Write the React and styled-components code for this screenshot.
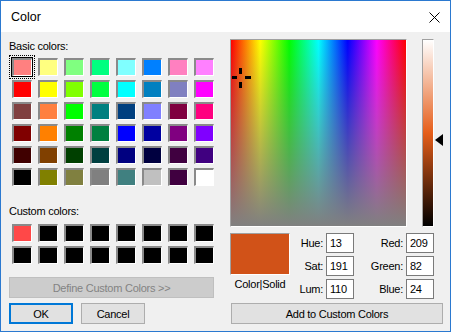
import styled, { createGlobalStyle } from "styled-components";

const basicColors = [
  "#FF8080", "#FFFF80", "#80FF80", "#00FF80", "#80FFFF", "#0080FF", "#FF80C0", "#FF80FF",
  "#FF0000", "#FFFF00", "#80FF00", "#00FF40", "#00FFFF", "#0080C0", "#8080C0", "#FF00FF",
  "#804040", "#FF8040", "#00FF00", "#008080", "#004080", "#8080FF", "#800040", "#FF0080",
  "#800000", "#FF8000", "#008000", "#008040", "#0000FF", "#0000A0", "#800080", "#8000FF",
  "#400000", "#804000", "#004000", "#004040", "#000080", "#000040", "#400040", "#400080",
  "#000000", "#808000", "#808040", "#808080", "#408080", "#C0C0C0", "#400040", "#FFFFFF"
];

const customColors = ["#FF4848", ...Array(15).fill("#000000")];

const current = { hue: 13, sat: 191, lum: 110, red: 209, green: 82, blue: 24 };

const GlobalStyle = createGlobalStyle`
  html, body {
    margin: 0;
    padding: 0;
    background: #ffffff;
  }
  body {
    font-family: "Liberation Sans", Arial, sans-serif;
    font-size: 11px;
    letter-spacing: -0.25px;
    color: #000;
  }
`;

const App = () => {
  const crossX = Math.round((current.hue / 240) * 176);
  const crossY = Math.round((1 - current.sat / 240) * 187);
  const arrowY = Math.round((1 - current.lum / 240) * 187);

  return (
    <>
      <GlobalStyle />
      <Window>
        <TitleBar>
          <Title>Color</Title>
          <CloseIcon viewBox="0 0 11 11">
            <path d="M0.5 0.5 L10.5 10.5 M10.5 0.5 L0.5 10.5" stroke="#000" strokeWidth="1" />
          </CloseIcon>
        </TitleBar>
        <Body>
          <LeftPane>
            <SectionLabel>Basic colors:</SectionLabel>
            <SwatchGrid>
              {basicColors.map((c, i) => (
                <SwatchCell key={i} $selected={i === 0}>
                  <Swatch $color={c} />
                </SwatchCell>
              ))}
            </SwatchGrid>
            <SectionLabel $top={18}>Custom colors:</SectionLabel>
            <SwatchGrid $top={6}>
              {customColors.map((c, i) => (
                <SwatchCell key={i}>
                  <Swatch $color={c} />
                </SwatchCell>
              ))}
            </SwatchGrid>
            <WideButton disabled>Define Custom Colors &gt;&gt;</WideButton>
            <ButtonRow>
              <DialogButton $default>OK</DialogButton>
              <DialogButton>Cancel</DialogButton>
            </ButtonRow>
          </LeftPane>

          <RightPane>
            <PickerRow>
              <Spectrum>
                <Crosshair viewBox="0 0 19 20" style={{ left: crossX - 9, top: crossY - 10 }}>
                  <rect x="7" y="0" width="3" height="6" fill="#000" />
                  <rect x="7" y="14" width="3" height="6" fill="#000" />
                  <rect x="0" y="8" width="5" height="3" fill="#000" />
                  <rect x="13" y="8" width="6" height="3" fill="#000" />
                </Crosshair>
              </Spectrum>
              <LumColumn>
                <LumBar />
                <LumArrow viewBox="0 0 8 12" style={{ top: arrowY - 6 }}>
                  <path d="M8 0 L0 6 L8 12 Z" fill="#000" />
                </LumArrow>
              </LumColumn>
            </PickerRow>

            <ValuesRow>
              <PreviewColumn>
                <Preview $color="#D15218" />
                <PreviewLabel>Color|Solid</PreviewLabel>
              </PreviewColumn>
              <Fields>
                <FieldLabel>Hue:</FieldLabel>
                <Field value={current.hue} readOnly />
                <FieldLabel>Red:</FieldLabel>
                <Field value={current.red} readOnly />
                <FieldLabel>Sat:</FieldLabel>
                <Field value={current.sat} readOnly />
                <FieldLabel>Green:</FieldLabel>
                <Field value={current.green} readOnly />
                <FieldLabel>Lum:</FieldLabel>
                <Field value={current.lum} readOnly />
                <FieldLabel>Blue:</FieldLabel>
                <Field value={current.blue} readOnly />
              </Fields>
            </ValuesRow>

            <AddButton>Add to Custom Colors</AddButton>
          </RightPane>
        </Body>
      </Window>
    </>
  );
};

const Window = styled.div`
  width: 451px;
  height: 332px;
  box-sizing: border-box;
  border: 1px solid #2b79d0;
  background: #f0f0f0;
  display: flex;
  flex-direction: column;
`;

const TitleBar = styled.div`
  height: 31px;
  flex-shrink: 0;
  background: #ffffff;
  display: flex;
  align-items: center;
  justify-content: space-between;
  padding: 0 10px 0 10px;
`;

const Title = styled.div`
  font-size: 12.5px;
  letter-spacing: 0;
  margin-top: 1px;
`;

const CloseIcon = styled.svg`
  width: 11px;
  height: 11px;
  margin-top: 1px;
`;

const Body = styled.div`
  flex: 1;
  display: flex;
  padding-left: 8px;
`;

const LeftPane = styled.div`
  width: 205px;
  display: flex;
  flex-direction: column;
`;

const SectionLabel = styled.div`
  height: 14px;
  line-height: 14px;
  margin-top: ${(p) => (p.$top ?? 7)}px;
`;

const SwatchGrid = styled.div`
  display: grid;
  grid-template-columns: repeat(8, 20px);
  grid-auto-rows: 18px;
  column-gap: 6px;
  row-gap: 4px;
  margin-top: ${(p) => (p.$top ?? 5)}px;
  padding-left: 3px;
`;

const SwatchCell = styled.div`
  position: relative;
  width: 20px;
  height: 18px;
  box-sizing: border-box;
  border-top: 2px solid #8a8a8a;
  border-left: 2px solid #8a8a8a;
  border-right: 1px solid #ffffff;
  border-bottom: 1px solid #ffffff;
  outline: ${(p) => (p.$selected ? "1px solid #000" : "none")};
  outline-offset: 0;

  &::after {
    content: "";
    display: ${(p) => (p.$selected ? "block" : "none")};
    position: absolute;
    left: -5px;
    top: -5px;
    right: -4px;
    bottom: -4px;
    border: 1px dotted #000;
  }
`;

const Swatch = styled.div`
  width: 100%;
  height: 100%;
  background: ${(p) => p.$color};
`;

const BaseButton = styled.button`
  font-family: inherit;
  font-size: 11px;
  letter-spacing: -0.25px;
  height: 21px;
  padding: 0;
  box-sizing: border-box;
  background: #e1e1e1;
  border: 1px solid #adadad;
  color: #000;
`;

const WideButton = styled(BaseButton)`
  width: 205px;
  margin-top: 13px;

  &:disabled {
    background: #cccccc;
    border-color: #bfbfbf;
    color: #838383;
  }
`;

const ButtonRow = styled.div`
  display: flex;
  gap: 8px;
  margin-top: 5px;
`;

const DialogButton = styled(BaseButton)`
  width: 64px;
  border: ${(p) => (p.$default ? "2px solid #0078d7" : "1px solid #adadad")};
`;

const RightPane = styled.div`
  margin-left: 16px;
  width: 213px;
  display: flex;
  flex-direction: column;
`;

const PickerRow = styled.div`
  display: flex;
  margin-top: 7px;
`;

const Spectrum = styled.div`
  position: relative;
  width: 177px;
  height: 188px;
  box-sizing: border-box;
  border-top: 1px solid #a0a0a0;
  border-left: 1px solid #a0a0a0;
  border-right: 1px solid #ffffff;
  border-bottom: 1px solid #ffffff;
  background:
    linear-gradient(to bottom, rgba(128, 128, 128, 0), #808080),
    linear-gradient(
      to right,
      #ff0000 0%,
      #ffff00 16.67%,
      #00ff00 33.33%,
      #00ffff 50%,
      #0000ff 66.67%,
      #ff00ff 83.33%,
      #ff0000 100%
    );
`;

const Crosshair = styled.svg`
  position: absolute;
  width: 19px;
  height: 20px;
`;

const LumColumn = styled.div`
  position: relative;
  margin-left: 15px;
  width: 21px;
`;

const LumBar = styled.div`
  width: 12px;
  height: 188px;
  box-sizing: border-box;
  border-top: 1px solid #a0a0a0;
  border-left: 1px solid #a0a0a0;
  border-right: 1px solid #ffffff;
  border-bottom: 1px solid #ffffff;
  background: linear-gradient(
    to bottom,
    #ffffff 0%,
    hsl(20, 80%, 50%) 50%,
    #000000 100%
  );
`;

const LumArrow = styled.svg`
  position: absolute;
  left: 13px;
  width: 8px;
  height: 12px;
`;

const ValuesRow = styled.div`
  display: flex;
  margin-top: 6px;
`;

const PreviewColumn = styled.div`
  width: 60px;
  display: flex;
  flex-direction: column;
  align-items: center;
`;

const Preview = styled.div`
  width: 60px;
  height: 42px;
  box-sizing: border-box;
  border-top: 1px solid #a0a0a0;
  border-left: 1px solid #a0a0a0;
  border-right: 1px solid #ffffff;
  border-bottom: 1px solid #ffffff;
  background: ${(p) => p.$color};
`;

const PreviewLabel = styled.div`
  margin-top: 2px;
  line-height: 14px;
  white-space: nowrap;
`;

const Fields = styled.div`
  display: grid;
  grid-template-columns: 36px 28px 52px 28px;
  grid-auto-rows: 20px;
  row-gap: 3px;
`;

const FieldLabel = styled.div`
  text-align: right;
  padding-right: 3px;
  line-height: 20px;
`;

const Field = styled.input`
  width: 28px;
  height: 20px;
  box-sizing: border-box;
  border: 1px solid #7a7a7a;
  background: #fff;
  font-family: inherit;
  font-size: 11px;
  letter-spacing: -0.25px;
  padding: 0 0 0 3px;
  margin: 0;
  outline: none;
`;

const AddButton = styled(BaseButton)`
  width: 212px;
  margin-left: 1px;
  margin-top: 4px;
`;

export default App;
